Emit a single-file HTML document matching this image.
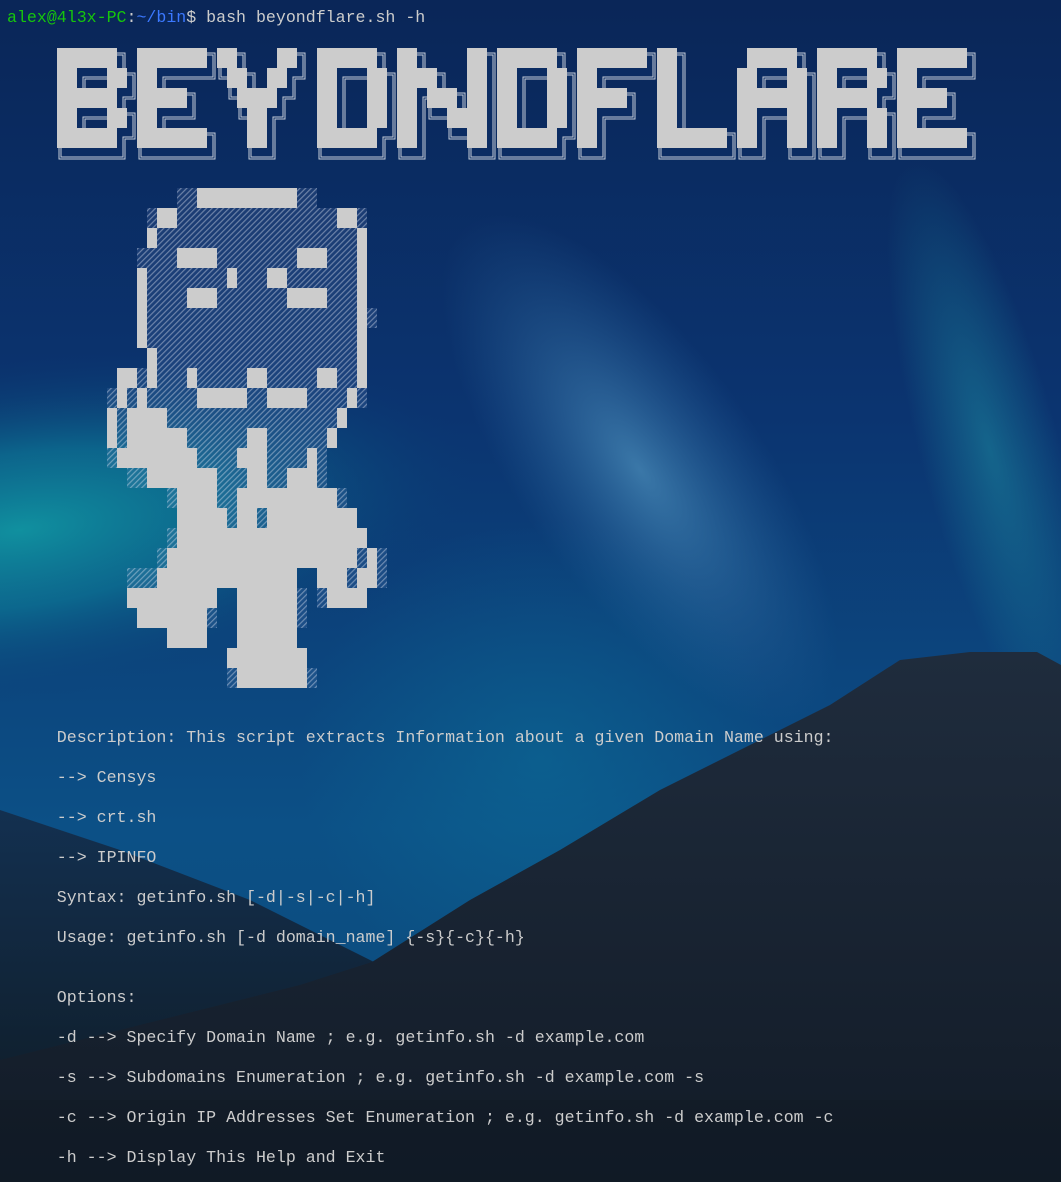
<!DOCTYPE html>
<html><head><meta charset="utf-8">
<style>
html,body{margin:0;padding:0;width:1061px;height:1182px;overflow:hidden;background:#0a2a5e}
#bg{position:absolute;left:0;top:0}
pre{position:absolute;left:7px;top:8px;margin:0;font-family:"Liberation Mono",monospace;font-size:16.6px;line-height:20px;color:#cccccc;white-space:pre}
.g{color:#16c60c}.b{color:#3b78ff}
</style></head><body>
<svg id="bg" width="1061" height="1182" viewBox="0 0 1061 1182">
<defs>
<linearGradient id="sky" x1="0" y1="0" x2="0" y2="1">
<stop offset="0" stop-color="#0a2658"/><stop offset="0.35" stop-color="#0b3470"/><stop offset="0.7" stop-color="#0c5086"/><stop offset="1" stop-color="#0b4a78"/></linearGradient>
<radialGradient id="teal" gradientUnits="userSpaceOnUse" cx="0" cy="0" r="1" gradientTransform="translate(20 530) rotate(-8) scale(460 170)">
<stop offset="0" stop-color="#10909f" stop-opacity="1"/><stop offset="0.45" stop-color="#0d7896" stop-opacity="0.7"/><stop offset="1" stop-color="#0b3c74" stop-opacity="0"/></radialGradient>
<radialGradient id="cloud" gradientUnits="userSpaceOnUse" cx="0" cy="0" r="1" gradientTransform="translate(640 470) rotate(55) scale(300 120)">
<stop offset="0" stop-color="#4f93bf" stop-opacity="0.7"/><stop offset="1" stop-color="#2e6fa6" stop-opacity="0"/></radialGradient>
<radialGradient id="aur" gradientUnits="userSpaceOnUse" cx="0" cy="0" r="1" gradientTransform="translate(990 450) rotate(75) scale(300 70)">
<stop offset="0" stop-color="#1c8aa0" stop-opacity="0.55"/><stop offset="1" stop-color="#1c8aa0" stop-opacity="0"/></radialGradient>
<radialGradient id="low" cx="540" cy="760" r="240" gradientUnits="userSpaceOnUse">
<stop offset="0" stop-color="#0d7aa0" stop-opacity="0.4"/><stop offset="1" stop-color="#0d7aa0" stop-opacity="0"/></radialGradient>
<linearGradient id="mtn" x1="0" y1="0" x2="0" y2="1">
<stop offset="0" stop-color="#1f2c3d"/><stop offset="1" stop-color="#121b27"/></linearGradient>
<linearGradient id="hill" x1="0" y1="0" x2="0" y2="1">
<stop offset="0" stop-color="#133050"/><stop offset="1" stop-color="#10202f"/></linearGradient>
<pattern id="h" width="4" height="4" patternUnits="userSpaceOnUse" patternTransform="rotate(45)">
<rect width="4" height="4" fill="rgba(120,150,200,0.15)"/><rect width="1.2" height="4" fill="rgba(230,235,245,0.4)"/></pattern>
</defs>
<rect width="1061" height="1182" fill="url(#sky)"/>
<rect width="1061" height="1182" fill="url(#teal)"/>
<rect width="1061" height="1182" fill="url(#cloud)"/>
<rect width="1061" height="1182" fill="url(#aur)"/>
<rect width="1061" height="1182" fill="url(#low)"/>
<polygon points="0,810 120,850 250,900 330,940 380,965 300,1060 0,1070" fill="url(#hill)"/>
<polygon points="372,962 470,900 560,850 660,790 750,745 830,705 900,660 970,652 1037,652 1061,665 1061,1182 0,1182 0,1060 200,1010 300,985" fill="url(#mtn)"/>
<rect y="1100" width="1061" height="82" fill="#0f1824" opacity="0.4"/>

<g id="ban" transform="translate(0,48)">
<g transform="translate(57,0)"><rect x="0" y="0" width="60" height="20"/><rect x="0" y="20" width="20" height="20"/><rect x="50" y="20" width="20" height="20"/><rect x="0" y="40" width="60" height="20"/><rect x="0" y="60" width="20" height="20"/><rect x="50" y="60" width="20" height="20"/><rect x="0" y="80" width="60" height="20"/></g>
<g transform="translate(137,0)"><rect x="0" y="0" width="70" height="20"/><rect x="0" y="20" width="20" height="20"/><rect x="0" y="40" width="50" height="20"/><rect x="0" y="60" width="20" height="20"/><rect x="0" y="80" width="70" height="20"/></g>
<g transform="translate(217,0)"><rect x="0" y="0" width="20" height="20"/><rect x="60" y="0" width="20" height="20"/><rect x="10" y="20" width="20" height="20"/><rect x="50" y="20" width="20" height="20"/><rect x="20" y="40" width="40" height="20"/><rect x="30" y="60" width="20" height="40"/></g>
<g transform="translate(317,0)"><rect x="0" y="0" width="60" height="20"/><rect x="0" y="20" width="20" height="60"/><rect x="50" y="20" width="20" height="60"/><rect x="0" y="80" width="60" height="20"/></g>
<g transform="translate(397,0)"><rect x="0" y="0" width="20" height="100"/><rect x="70" y="0" width="20" height="100"/><rect x="20" y="20" width="20" height="20"/><rect x="30" y="40" width="30" height="20"/><rect x="50" y="60" width="20" height="20"/></g>
<g transform="translate(497,0)"><rect x="0" y="0" width="60" height="20"/><rect x="0" y="20" width="20" height="60"/><rect x="50" y="20" width="20" height="60"/><rect x="0" y="80" width="60" height="20"/></g>
<g transform="translate(577,0)"><rect x="0" y="0" width="70" height="20"/><rect x="0" y="20" width="20" height="20"/><rect x="0" y="40" width="50" height="20"/><rect x="0" y="60" width="20" height="40"/></g>
<g transform="translate(657,0)"><rect x="0" y="0" width="20" height="80"/><rect x="0" y="80" width="70" height="20"/></g>
<g transform="translate(737,0)"><rect x="10" y="0" width="50" height="20"/><rect x="0" y="20" width="20" height="80"/><rect x="50" y="20" width="20" height="80"/><rect x="20" y="40" width="30" height="20"/></g>
<g transform="translate(817,0)"><rect x="0" y="0" width="60" height="20"/><rect x="0" y="20" width="20" height="80"/><rect x="50" y="20" width="20" height="20"/><rect x="20" y="40" width="40" height="20"/><rect x="50" y="60" width="20" height="40"/></g>
<g transform="translate(897,0)"><rect x="0" y="0" width="70" height="20"/><rect x="0" y="20" width="20" height="20"/><rect x="0" y="40" width="50" height="20"/><rect x="0" y="60" width="20" height="20"/><rect x="0" y="80" width="70" height="20"/></g>
</g>
<use href="#ban" transform="translate(5,8)" fill="#c4ccd8" stroke="#c4ccd8" stroke-width="7"/>
<use href="#ban" transform="translate(5,8)" fill="#0b2c62" stroke="#0b2c62" stroke-width="5"/>
<use href="#ban" transform="translate(5,8)" fill="#c4ccd8" stroke="#c4ccd8" stroke-width="3"/>
<use href="#ban" transform="translate(5,8)" fill="#0b2c62" stroke="#0b2c62" stroke-width="1"/>
<use href="#ban" fill="#cccccc"/>

<g transform="translate(107,188)">
<g fill="url(#h)">
<rect x="70" y="0" width="20" height="20"/><rect x="190" y="0" width="20" height="20"/>
<rect x="40" y="20" width="10" height="20"/><rect x="70" y="20" width="160" height="20"/><rect x="250" y="20" width="10" height="20"/>
<rect x="50" y="40" width="200" height="20"/>
<rect x="30" y="60" width="40" height="20"/><rect x="110" y="60" width="80" height="20"/><rect x="220" y="60" width="30" height="20"/>
<rect x="40" y="80" width="80" height="20"/><rect x="130" y="80" width="30" height="20"/><rect x="180" y="80" width="70" height="20"/>
<rect x="40" y="100" width="40" height="20"/><rect x="110" y="100" width="70" height="20"/><rect x="220" y="100" width="30" height="20"/>
<rect x="40" y="120" width="210" height="20"/><rect x="260" y="120" width="10" height="20"/>
<rect x="40" y="140" width="210" height="20"/>
<rect x="50" y="160" width="200" height="20"/>
<rect x="30" y="180" width="10" height="20"/><rect x="50" y="180" width="30" height="20"/><rect x="90" y="180" width="50" height="20"/><rect x="160" y="180" width="50" height="20"/><rect x="230" y="180" width="20" height="20"/>
<rect x="0" y="200" width="10" height="20"/><rect x="20" y="200" width="10" height="20"/><rect x="40" y="200" width="50" height="20"/><rect x="140" y="200" width="20" height="20"/><rect x="200" y="200" width="40" height="20"/><rect x="250" y="200" width="10" height="20"/>
<rect x="10" y="220" width="10" height="20"/><rect x="60" y="220" width="170" height="20"/>
<rect x="10" y="240" width="10" height="20"/><rect x="80" y="240" width="60" height="20"/><rect x="160" y="240" width="60" height="20"/>
<rect x="0" y="260" width="10" height="20"/><rect x="90" y="260" width="40" height="20"/><rect x="160" y="260" width="40" height="20"/><rect x="210" y="260" width="10" height="20"/>
<rect x="20" y="280" width="20" height="20"/><rect x="110" y="280" width="30" height="20"/><rect x="160" y="280" width="20" height="20"/><rect x="210" y="280" width="10" height="20"/>
<rect x="60" y="300" width="10" height="20"/><rect x="110" y="300" width="20" height="20"/><rect x="230" y="300" width="10" height="20"/>
<rect x="120" y="320" width="10" height="20"/><rect x="150" y="320" width="10" height="20"/>
<rect x="60" y="340" width="10" height="20"/>
<rect x="50" y="360" width="10" height="20"/><rect x="250" y="360" width="10" height="20"/><rect x="270" y="360" width="10" height="20"/>
<rect x="20" y="380" width="30" height="20"/><rect x="240" y="380" width="10" height="20"/><rect x="270" y="380" width="10" height="20"/>
<rect x="190" y="400" width="10" height="20"/><rect x="210" y="400" width="10" height="20"/>
<rect x="100" y="420" width="10" height="20"/><rect x="190" y="420" width="10" height="20"/>
<rect x="120" y="480" width="10" height="20"/><rect x="200" y="480" width="10" height="20"/>
</g>
<g fill="#cccccc">
<rect x="90" y="0" width="100" height="20"/>
<rect x="50" y="20" width="20" height="20"/><rect x="230" y="20" width="20" height="20"/>
<rect x="40" y="40" width="10" height="20"/><rect x="250" y="40" width="10" height="20"/>
<rect x="70" y="60" width="40" height="20"/><rect x="190" y="60" width="30" height="20"/><rect x="250" y="60" width="10" height="20"/>
<rect x="30" y="80" width="10" height="20"/><rect x="120" y="80" width="10" height="20"/><rect x="160" y="80" width="20" height="20"/><rect x="250" y="80" width="10" height="20"/>
<rect x="30" y="100" width="10" height="20"/><rect x="80" y="100" width="30" height="20"/><rect x="180" y="100" width="40" height="20"/><rect x="250" y="100" width="10" height="20"/>
<rect x="30" y="120" width="10" height="20"/><rect x="250" y="120" width="10" height="20"/>
<rect x="30" y="140" width="10" height="20"/><rect x="250" y="140" width="10" height="20"/>
<rect x="40" y="160" width="10" height="20"/><rect x="250" y="160" width="10" height="20"/>
<rect x="10" y="180" width="20" height="20"/><rect x="40" y="180" width="10" height="20"/><rect x="80" y="180" width="10" height="20"/><rect x="140" y="180" width="20" height="20"/><rect x="210" y="180" width="20" height="20"/><rect x="250" y="180" width="10" height="20"/>
<rect x="10" y="200" width="10" height="20"/><rect x="30" y="200" width="10" height="20"/><rect x="90" y="200" width="50" height="20"/><rect x="160" y="200" width="40" height="20"/><rect x="240" y="200" width="10" height="20"/>
<rect x="0" y="220" width="10" height="20"/><rect x="20" y="220" width="40" height="20"/><rect x="230" y="220" width="10" height="20"/>
<rect x="0" y="240" width="10" height="20"/><rect x="20" y="240" width="60" height="20"/><rect x="140" y="240" width="20" height="20"/><rect x="220" y="240" width="10" height="20"/>
<rect x="10" y="260" width="80" height="20"/><rect x="130" y="260" width="30" height="20"/><rect x="200" y="260" width="10" height="20"/>
<rect x="40" y="280" width="70" height="20"/><rect x="140" y="280" width="20" height="20"/><rect x="180" y="280" width="30" height="20"/>
<rect x="70" y="300" width="40" height="20"/><rect x="130" y="300" width="100" height="20"/>
<rect x="70" y="320" width="50" height="20"/><rect x="130" y="320" width="20" height="20"/><rect x="160" y="320" width="90" height="20"/>
<rect x="70" y="340" width="190" height="20"/>
<rect x="60" y="360" width="190" height="20"/><rect x="260" y="360" width="10" height="20"/>
<rect x="50" y="380" width="140" height="20"/><rect x="210" y="380" width="30" height="20"/><rect x="250" y="380" width="20" height="20"/>
<rect x="20" y="400" width="90" height="20"/><rect x="130" y="400" width="60" height="20"/><rect x="220" y="400" width="40" height="20"/>
<rect x="30" y="420" width="70" height="20"/><rect x="130" y="420" width="60" height="20"/>
<rect x="60" y="440" width="40" height="20"/><rect x="130" y="440" width="60" height="20"/>
<rect x="120" y="460" width="80" height="20"/>
<rect x="130" y="480" width="70" height="20"/>
</g>
</g>
</svg>
<pre><span class="g">alex@4l3x-PC</span>:<span class="b">~/bin</span>$ bash beyondflare.sh -h



































     Description: This script extracts Information about a given Domain Name using:

     --> Censys

     --> crt.sh

     --> IPINFO

     Syntax: getinfo.sh [-d|-s|-c|-h]

     Usage: getinfo.sh [-d domain_name] {-s}{-c}{-h}


     Options:

     -d --> Specify Domain Name ; e.g. getinfo.sh -d example.com

     -s --> Subdomains Enumeration ; e.g. getinfo.sh -d example.com -s

     -c --> Origin IP Addresses Set Enumeration ; e.g. getinfo.sh -d example.com -c

     -h --> Display This Help and Exit</pre>
</body></html>
